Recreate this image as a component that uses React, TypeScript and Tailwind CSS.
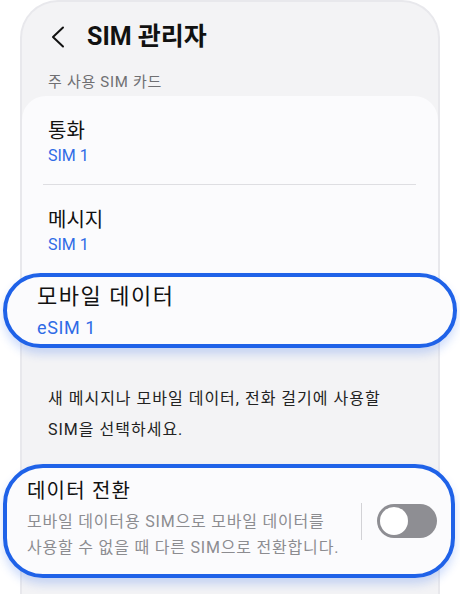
export default function App() {
  const font = { fontFamily: 'Roboto, "Noto Sans CJK KR", sans-serif' };

  return (
    <div className="w-[460px] h-[594px] overflow-hidden bg-white" style={font}>
      <div className="ml-[20px] w-[420px] min-h-[600px] rounded-t-[38px] border-2 border-b-0 border-[#e8e8ec] bg-[#f3f3f5] pt-[10px]">
        {/* header */}
        <div className="h-[50px] flex items-center pl-[29px]">
          <svg width="14" height="22" viewBox="0 0 14 22" fill="none" className="shrink-0">
            <path d="M12 1.5 L2 11 L12 20.5" stroke="#111" strokeWidth="2" strokeLinecap="round" strokeLinejoin="round" />
          </svg>
          <h1 className="ml-[22px] text-[25px] leading-[30px] font-bold text-[#111]">SIM 관리자</h1>
        </div>

        <p className="mt-[9px] pl-[26px] text-[15px] leading-[22px] text-[#6f6f72] tracking-[0.7px]">주 사용 SIM 카드</p>

        {/* card */}
        <div className="mt-[3px] rounded-[24px] bg-[#fbfbfd] pt-[22px]">
          <div className="pl-[26px]">
            <p className="text-[20px] leading-[26px] text-[#111]">통화</p>
            <p className="mt-[2px] text-[16px] leading-[20px] text-[#2f6be6]">SIM 1</p>
          </div>
          <div className="mt-[18px] ml-[21px] mr-[22px] h-px bg-[#dedee2]" />
          <div className="pl-[26px] mt-[22px]">
            <p className="text-[20px] leading-[26px] text-[#111]">메시지</p>
            <p className="mt-[2px] text-[16px] leading-[20px] text-[#2f6be6]">SIM 1</p>
          </div>

          {/* highlighted: mobile data */}
          <div className="mt-[18px] -mx-[19px] h-[75px] rounded-full border-4 border-[#1f62e8] bg-[#fbfbfd] shadow-[0_6px_10px_rgba(37,99,235,0.22)] flex flex-col justify-center pl-[30px]">
            <p className="text-[22px] leading-[28px] text-[#111] tracking-[1.5px]">모바일 데이터</p>
            <p className="mt-[6px] text-[18px] leading-[22px] text-[#2f6be6] tracking-[0.6px]">eSIM 1</p>
          </div>
        </div>

        <p className="mt-[35px] pl-[26px] text-[16px] leading-[31px] text-[#222] whitespace-nowrap tracking-[1px]">
          새 메시지나 모바일 데이터, 전화 걸기에 사용할
          <br />
          SIM을 선택하세요.
        </p>

        {/* highlighted: data switch */}
        <div className="mt-[19px] -ml-[19px] -mr-[17px] h-[114px] rounded-[40px] border-4 border-[#1f62e8] bg-[#fbfbfd] shadow-[0_6px_10px_rgba(37,99,235,0.22)] flex items-center pl-[20px] pr-[14px]">
          <div className="flex-1 pb-[4px]">
            <p className="text-[20px] leading-[26px] text-[#111] tracking-[1.2px]">데이터 전환</p>
            <p className="mt-[5px] text-[16px] leading-[26px] text-[#8c8c90] whitespace-nowrap tracking-[0.8px]">
              모바일 데이터용 SIM으로 모바일 데이터를
              <br />
              사용할 수 없을 때 다른 SIM으로 전환합니다.
            </p>
          </div>
          <div className="w-px h-[37px] bg-[#d2d2d6] mr-[15px]" />
          <div className="w-[60px] h-[34px] rounded-full bg-[#8e8e93] flex items-center">
            <div className="ml-[3px] w-[28px] h-[28px] rounded-full bg-white" />
          </div>
        </div>
      </div>
    </div>
  );
}
